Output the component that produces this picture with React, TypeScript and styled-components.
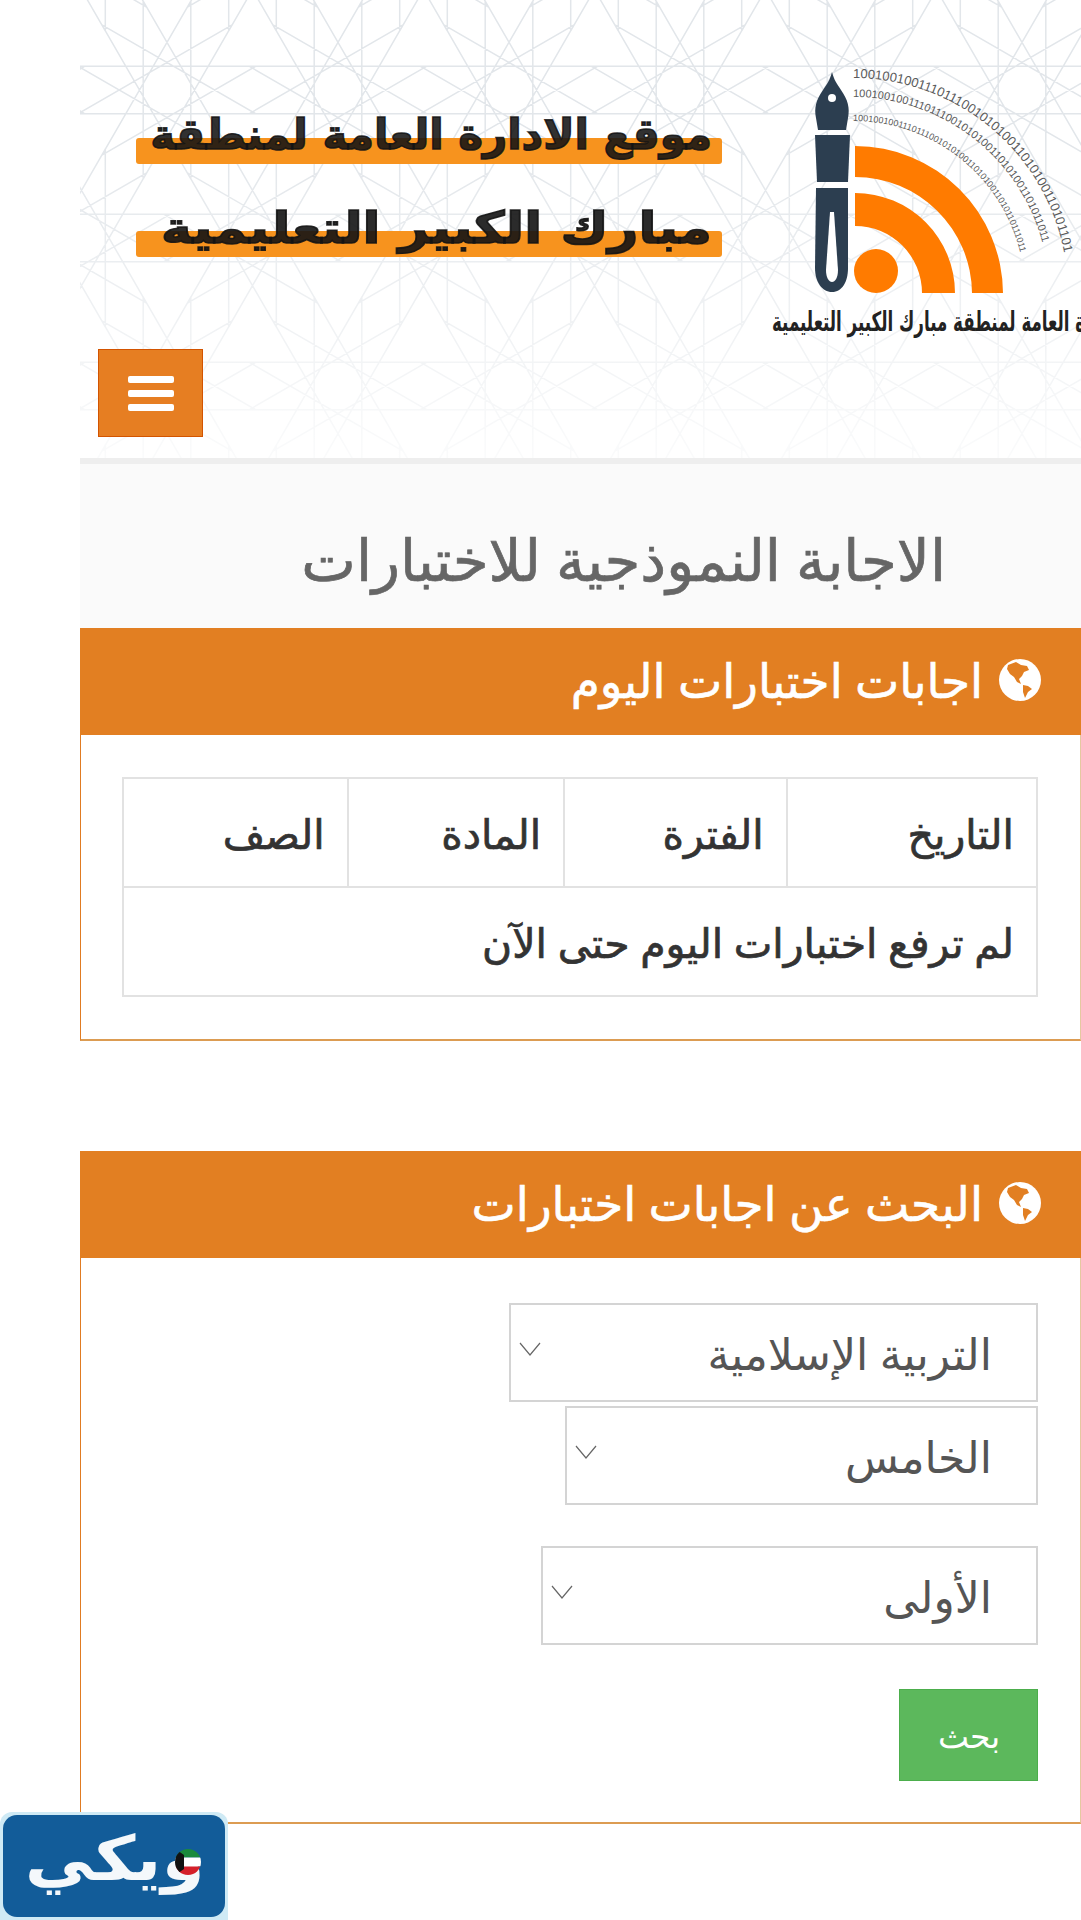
import React from "react";
import styled, { createGlobalStyle } from "styled-components";

const ARABIC = `"Noto Sans", "DejaVu Sans", sans-serif`;

const Global = createGlobalStyle`
  html, body { margin: 0; padding: 0; background: #fff; }
  body { font-family: ${ARABIC}; }
  * { box-sizing: border-box; }
`;

const Page = styled.div`
  position: relative;
  width: 1081px;
  height: 1920px;
  padding-left: 80px;
  overflow: hidden;
  direction: rtl;
`;

const PatternLayer = styled.svg`
  position: absolute;
  left: 80px;
  top: 0;
  width: 1001px;
  height: 464px;
`;

const Top = styled.header`
  position: relative;
  height: 464px;
  border-bottom: 6px solid #eeeeee;
  overflow: hidden;
`;

const Brand = styled.div`
  display: flex;
  height: 349px;
  align-items: flex-start;
`;

const LogoArt = styled.svg`
  flex: none;
  width: 311px;
  height: 290px;
  margin-top: 60px;
`;

const Titles = styled.div`
  display: flex;
  flex-direction: column;
  gap: 29px;
  margin: 100px 48px 0 0;
  width: 586px;
`;

const TitleLine = styled.div`
  position: relative;
  isolation: isolate;
  height: 64px;
  padding-right: 10px;
  font-family: "DejaVu Sans", sans-serif;
  font-weight: 700;
  line-height: 70px;
  white-space: nowrap;
  color: rgba(20, 20, 20, 0.9);
  -webkit-text-stroke: 1.6px rgba(20, 20, 20, 0.9);
  &::before {
    content: "";
    position: absolute;
    z-index: -1;
    left: 0;
    right: 0;
    bottom: 0;
    height: 26px;
    border-radius: 3px;
    background: #f7931e;
  }
`;

const TitleText = styled.span<{ $size: number; $stretch: number }>`
  display: inline-block;
  font-size: ${(p) => p.$size}px;
  transform: scaleX(${(p) => p.$stretch});
  transform-origin: right center;
`;

const Toggle = styled.button`
  display: flex;
  flex-direction: column;
  align-items: center;
  justify-content: center;
  gap: 7px;
  width: 105px;
  height: 88px;
  margin: 0 auto 0 18px;
  padding: 0;
  background: #e67e22;
  border: 1px solid #d35400;
`;

const ToggleBar = styled.span`
  display: block;
  width: 46px;
  height: 7px;
  border-radius: 2px;
  background: #fff;
`;

const PageTitle = styled.h1`
  height: 164px;
  margin: 0;
  padding: 60px 135px 0 0;
  background: #fafafa;
  color: #666;
  font-size: 58px;
  font-weight: 400;
  line-height: 70px;
  white-space: nowrap;
  -webkit-text-stroke: 0.7px #666;
`;

const Panel = styled.section`
  border-style: solid;
  border-width: 0 1px 2px 1px;
  border-color: #e5c9a0 #e5c9a0 #dc9c52 #e07b22;
  margin-bottom: 110px;
  background: #fff;
`;

const PanelHead = styled.h2`
  display: flex;
  align-items: center;
  gap: 16px;
  height: 107px;
  margin: 0 -1px;
  padding: 0 40px 4px 0;
  background: #e27f22;
  color: #fff;
  font-size: 47px;
  font-weight: 400;
  white-space: nowrap;
  -webkit-text-stroke: 0.6px #fff;
`;

const GlobeIcon = styled.svg`
  flex: none;
  width: 42px;
  height: 42px;
`;

const TableWrap = styled.div`
  padding: 42px;
`;

const Table = styled.table`
  width: 916px;
  border-collapse: collapse;
  color: #333;
  font-size: 41px;
`;

const Cell = styled.th<{ $width?: number }>`
  width: ${(p) => (p.$width ? `${p.$width}px` : "auto")};
  height: 109px;
  padding: 0 22px;
  border: 2px solid #e2e2e2;
  text-align: right;
  font-weight: 400;
  white-space: nowrap;
  -webkit-text-stroke: 0.7px #333;
`;

const Form = styled.form`
  display: flex;
  flex-direction: column;
  align-items: flex-start;
  padding: 45px 42px 41px;
`;

const SelectBox = styled.div<{ $width: number; $gap: number }>`
  position: relative;
  width: ${(p) => p.$width}px;
  height: 99px;
  margin-bottom: ${(p) => p.$gap}px;
  svg {
    position: absolute;
    left: 10px;
    top: 39px;
    width: 22px;
    height: 14px;
    pointer-events: none;
  }
`;

const Select = styled.select`
  width: 100%;
  height: 100%;
  padding: 0 44px 0 0;
  appearance: none;
  background: #fff;
  border: 2px solid #d4d4d4;
  border-radius: 0;
  color: #555;
  font-family: ${ARABIC};
  font-size: 44px;
`;

const Submit = styled.button`
  width: 139px;
  height: 92px;
  padding: 0;
  border: 1px solid #4cae4c;
  background: #5cb85c;
  color: #fff;
  font-family: ${ARABIC};
  font-size: 33px;
  font-weight: 300;
`;

const Wiki = styled.div`
  position: absolute;
  left: 0;
  bottom: 0;
  width: 228px;
  height: 108px;
  padding: 3px;
  background: #cfeaf5;
  border-radius: 12px 12px 0 0;
`;

const WikiInner = styled.div`
  position: relative;
  height: 100%;
  border-radius: 14px;
  background: #125c99;
  display: flex;
  align-items: center;
  justify-content: flex-start;
  padding: 0 0 14px 0;
  color: #f4f8fb;
  font-family: "DejaVu Sans", sans-serif;
  font-size: 62px;
  font-weight: 700;
  line-height: 1;
  overflow: hidden;
`;

const WikiWord = styled.span`
  display: inline-block;
  margin-right: 20px;
  transform: scaleX(1.12);
  transform-origin: right center;
`;

const WikiFlag = styled.svg`
  position: absolute;
  right: 23px;
  top: 33px;
  width: 28px;
  height: 28px;
`;

const STAR_DX = 171;
const STAR_DY = 148;

const starPath = (cx: number, cy: number, r: number) => {
  let d = "";
  for (let i = 0; i < 12; i++) {
    const a = (i * Math.PI) / 6 + Math.PI / 12;
    const b = ((i + 5) * Math.PI) / 6 + Math.PI / 12;
    d += `M${(cx + r * Math.cos(a)).toFixed(1)} ${(cy + r * Math.sin(a)).toFixed(1)}L${(cx + r * Math.cos(b)).toFixed(1)} ${(cy + r * Math.sin(b)).toFixed(1)}`;
  }
  return d;
};

const buildPattern = () => {
  let d = "";
  for (let k = -1; k < 5; k++) {
    for (let j = -1; j < 8; j++) {
      const cx = 87 + j * STAR_DX + (k % 2 !== 0 ? STAR_DX / 2 : 0);
      const cy = 90 + k * STAR_DY;
      d += starPath(cx, cy, 92);
    }
  }
  return d;
};

const Pattern = () => (
  <PatternLayer aria-hidden="true">
    <defs>
      <linearGradient id="fade" x1="0" y1="0" x2="0" y2="1">
        <stop offset="0.3" stopColor="#fff" stopOpacity="0" />
        <stop offset="1" stopColor="#fff" stopOpacity="0.85" />
      </linearGradient>
    </defs>
    <path d={buildPattern()} fill="none" stroke="#e2e6ea" strokeWidth="1.5" />
    <rect width="1001" height="464" fill="url(#fade)" />
  </PatternLayer>
);

const ArcBinary = ({ id, r, size, text }: { id: string; r: number; size: number; text: string }) => (
  <>
    <path id={id} d={`M 853 ${293 - r} A ${r} ${r} 0 0 1 ${853 + r} 293`} fill="none" />
    <text fontFamily="Liberation Sans, sans-serif" fontSize={size} fill="#5a5a5a" direction="ltr">
      <textPath href={`#${id}`}>{text}</textPath>
    </text>
  </>
);

const Logo = () => (
  <LogoArt viewBox="770 60 311 290" aria-label="logo">
    <path
      d="M832 72 C834 80 837 84 841 90 C848 100 850 108 848 118 L846 130 L818 130 L816 118 C814 108 816 100 823 90 C827 84 830 80 832 72 Z"
      fill="#2c3e50"
    />
    <circle cx="832" cy="98" r="4" fill="#fff" />
    <path d="M815 135 H850 L848 182 H817 Z" fill="#2c3e50" />
    <path
      d="M816 188 H848 L848 268 C848 282 842 292 832 292 C822 292 815 282 815 268 Z"
      fill="#2c3e50"
    />
    <path d="M830 212 H834 L838 270 C838 278 835 282 832 282 C829 282 826 278 826 270 Z" fill="#fff" />
    <path d="M855 146 A148 148 0 0 1 1003 293 H972 A117 117 0 0 0 855 177 Z" fill="#ff7b00" />
    <path d="M855 193 A100 100 0 0 1 955 293 H922 A67 67 0 0 0 855 226 Z" fill="#ff7b00" />
    <circle cx="876" cy="271" r="22" fill="#ff7b00" />
    <ArcBinary id="b1" r={215} size={13} text="100100100111011100101010011010100110101101" />
    <ArcBinary id="b2" r={196} size={11} text="1001001001110111001010100110101001101011011" />
    <ArcBinary id="b3" r={172} size={9} text="10010010011101110010101001101010011010110111011" />
    <text
      x="1127"
      y="331"
      direction="rtl"
      fontFamily="DejaVu Sans, sans-serif"
      fontWeight="700"
      fontSize="27"
      fill="#222"
      textLength="355"
      lengthAdjust="spacingAndGlyphs"
    >
      الادارة العامة لمنطقة مبارك الكبير التعليمية
    </text>
  </LogoArt>
);

const Globe = () => (
  <GlobeIcon viewBox="0 0 42 42" aria-hidden="true">
    <circle cx="21" cy="21" r="21" fill="#fff" />
    <path
      d="M9 6 L17 3 L22 6 L28 7 L30 11 L25 13 L23 17 L20 20 L22 25 L18 23 L15 18 L11 15 L8 10 Z"
      fill="#e27f22"
    />
    <path d="M24 26 L29 27 L33 30 L29 33 L26 39 L24 33 Z" fill="#e27f22" />
  </GlobeIcon>
);

const Chevron = () => (
  <svg viewBox="0 0 22 14" aria-hidden="true">
    <path d="M1 1 L11 13 L21 1" fill="none" stroke="#666" strokeWidth="1.2" />
  </svg>
);

export default function App() {
  return (
    <Page>
      <Global />
      <Pattern />
      <Top>
        <Brand>
          <Logo />
          <Titles>
            <TitleLine>
              <TitleText $size={42} $stretch={1}>موقع الادارة العامة لمنطقة</TitleText>
            </TitleLine>
            <TitleLine>
              <TitleText $size={44} $stretch={1.19}>مبارك الكبير التعليمية</TitleText>
            </TitleLine>
          </Titles>
        </Brand>
        <Toggle aria-label="menu">
          <ToggleBar />
          <ToggleBar />
          <ToggleBar />
        </Toggle>
      </Top>
      <PageTitle>الاجابة النموذجية للاختبارات</PageTitle>
      <Panel>
        <PanelHead>
          <Globe />
          اجابات اختبارات اليوم
        </PanelHead>
        <TableWrap>
          <Table>
            <tbody>
              <tr>
                <Cell $width={251}>التاريخ</Cell>
                <Cell $width={223}>الفترة</Cell>
                <Cell $width={217}>المادة</Cell>
                <Cell $width={225}>الصف</Cell>
              </tr>
              <tr>
                <Cell colSpan={4}>لم ترفع اختبارات اليوم حتى الآن</Cell>
              </tr>
            </tbody>
          </Table>
        </TableWrap>
      </Panel>
      <Panel>
        <PanelHead>
          <Globe />
          البحث عن اجابات اختبارات
        </PanelHead>
        <Form>
          <SelectBox $width={529} $gap={4}>
            <Select defaultValue="a">
              <option value="a">التربية الإسلامية</option>
            </Select>
            <Chevron />
          </SelectBox>
          <SelectBox $width={473} $gap={41}>
            <Select defaultValue="a">
              <option value="a">الخامس</option>
            </Select>
            <Chevron />
          </SelectBox>
          <SelectBox $width={497} $gap={44}>
            <Select defaultValue="a">
              <option value="a">الأولى</option>
            </Select>
            <Chevron />
          </SelectBox>
          <Submit type="button">بحث</Submit>
        </Form>
      </Panel>
      <Wiki>
        <WikiInner>
          <WikiWord>ويكي</WikiWord>
          <WikiFlag viewBox="0 0 28 28" aria-hidden="true">
            <defs>
              <clipPath id="flagClip">
                <circle cx="14" cy="14" r="13" />
              </clipPath>
            </defs>
            <g clipPath="url(#flagClip)">
              <rect width="28" height="9.5" fill="#1a8a3c" />
              <rect y="9.5" width="28" height="9" fill="#fff" />
              <rect y="18.5" width="28" height="9.5" fill="#d4202a" />
              <path d="M0 0 L10 7 V21 L0 28 Z" fill="#111" />
            </g>
          </WikiFlag>
        </WikiInner>
      </Wiki>
    </Page>
  );
}
